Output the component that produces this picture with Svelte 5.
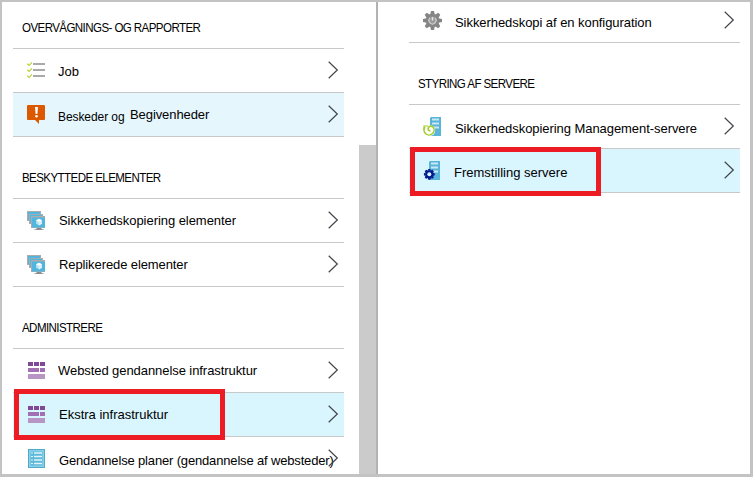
<script>
  const left = [
    {
      title: 'OVERVÅGNINGS- OG RAPPORTER', first: true,
      rows: [
        { icon: 'tasks', label: 'Job', x: 45, y: 1, track: 0 },
        { icon: 'alert', small: 'Beskeder og', label: 'Begivenheder', x: 45, y: 0, track: -0.08, tone: 'hover' }
      ]
    },
    {
      title: 'BESKYTTEDE ELEMENTER',
      rows: [
        { icon: 'monitors', label: 'Sikkerhedskopiering elementer', x: 46, y: 0, track: -0.05 },
        { icon: 'monitors', label: 'Replikerede elementer', x: 46, y: 0, track: -0.1 }
      ]
    },
    {
      title: 'ADMINISTRERE',
      rows: [
        { icon: 'blocks', label: 'Websted gendannelse infrastruktur', x: 45, y: 0, track: -0.07 },
        { icon: 'blocks', label: 'Ekstra infrastruktur', x: 46, y: 0, track: 0, tone: 'selected', mark: 'mark-left' },
        { icon: 'plan', label: 'Gendannelse planer (gendannelse af websteder)', x: 46, y: 2, track: -0.16 }
      ]
    }
  ];
  const right = [
    {
      rows: [{ icon: 'gear', label: 'Sikkerhedskopi af en konfiguration', x: 46, y: 2, track: -0.06, cut: true }]
    },
    {
      title: 'STYRING AF SERVERE',
      rows: [
        { icon: 'restore', label: 'Sikkerhedskopiering Management-servere', x: 46, y: 2, track: -0.06 },
        { icon: 'process', label: 'Fremstilling servere', x: 45, y: 2, track: 0, tone: 'selected', mark: 'mark-right' }
      ]
    }
  ];
  const teeth = [0, 45, 90, 135, 180, 225, 270, 315];
</script>

{#snippet monitor(x, y)}
  <rect {x} {y} width="14" height="10" fill="#a9adb0" />
  <rect x={x + 1} y={y + 1} width="12" height="8" fill="#51b5de" />
{/snippet}

{#snippet server()}
  <path d="M8 0h10v19H7V1z" fill="#59b4d9" />
  <path d="M9 2.500h7M9 6.500h7M9 10.500h7" stroke="#c9e8f4" stroke-width="2" />
{/snippet}

{#snippet icon(name)}
  <svg class="icon" width="20" height="20" viewBox="0 0 20 20">
    {#if name === 'tasks'}
      <path d="M6 3h12M6 9h12M6 15h12" stroke="#aaa" stroke-width="2" />
      <path d="M.4 2.700l1.600 1.600L5 1.300M.4 8.700l1.600 1.600L5 7.300M.4 14.700l1.600 1.600L5 13.300" fill="none" stroke="#b8d432" stroke-width="1.200" />
    {:else if name === 'alert'}
      <path d="M1 0h16q1 0 1 1v13q0 1-1 1h-5v4l-4-4H1q-1 0-1-1V1q0-1 1-1z" fill="#dd5900" />
      <path d="M8 2h3l-.6 7H8.600z" fill="#fff" />
      <circle cx="9.500" cy="11.300" r="1.300" fill="#fff" />
    {:else if name === 'monitors'}
      {@render monitor(0, 0)}
      {@render monitor(2, 3)}
      <rect x="4" y="5" width="14" height="12" fill="#a9adb0" />
      <rect x="5" y="6.500" width="13" height="10" fill="#51b5de" />
      <path d="M9.500 17h5v1.200h2V19h-9v-.8h2z" fill="#8a8d90" />
      <path d="M12 7.800l2.900 1.500v3.500L12 14.400l-2.900-1.600V9.300z" fill="#b9e2f2" />
      <path d="M12 7.800l2.900 1.500L12 11 9.100 9.300z" fill="#fff" />
      <path d="M12 11l2.900-1.700v3.500L12 14.400z" fill="#dff2fa" />
    {:else if name === 'blocks'}
      <path d="M1 1h5v4H1zM7 1h5v4H7zM13 1h5v4h-5z" fill="#804998" />
      <path d="M1 7h11v4H1zM13 7h5v4h-5z" fill="#a16fb4" />
      <path d="M1 13h17v5H1z" fill="#b796c6" />
    {:else if name === 'plan'}
      <rect x="1.500" y=".5" width="16" height="18" fill="#8bcfe6" stroke="#4eabc9" />
      <rect x="3.500" y="2.500" width="12" height="14" fill="#5bb9d9" />
      <path d="M7 4h8M7 7.500h8M7 11h8M7 14.500h8" stroke="#e2f4fa" stroke-width="1.400" />
      <path d="M4 4h2M4 7.500h2M4 11h2M4 14.500h2" stroke="#e2f4fa" stroke-width="1.200" />
    {:else if name === 'gear'}
      <g fill="#858585">
        {#each teeth as a}
          <path d="M7.200 3.500L8 0h3l.8 3.500z" transform="rotate({a} 9.500 9.500)" />
        {/each}
        <circle cx="9.500" cy="9.500" r="6.800" />
      </g>
      <circle cx="9.500" cy="9.500" r="4" fill="#9a9a9a" />
      <path d="M7 7A3.500 3.500 0 1 0 12 7" fill="none" stroke="#cfcfcf" stroke-width="1.200" />
      <path d="M9.500 6v3.500" stroke="#e4e4e4" stroke-width="1.500" />
    {:else if name === 'restore'}
      {@render server()}
      <circle cx="6.500" cy="13.500" r="5.600" fill="#fff" />
      <path d="M2 10A5 5 0 1 0 9.800 9.700Q7 8.200 5.400 10.600Q4.300 13.800 7.500 13.600" fill="none" stroke="#a3cf2c" stroke-width="1.600" />
      <path d="M1 13.200V9h4.200" fill="none" stroke="#a3cf2c" stroke-width="1.200" />
    {:else if name === 'process'}
      <g transform="translate(-1 0)">{@render server()}</g>
      <g fill="#00188f">
        {#each teeth as a}
          <path d="M4.700 9.500L5.300 7.900h2l.6 1.600z" transform="rotate({a} 6.300 13.300)" />
        {/each}
        <circle cx="6.300" cy="13.300" r="4.100" />
      </g>
      <circle cx="6.300" cy="13.300" r="2" fill="#d9f5fe" />
    {/if}
  </svg>
{/snippet}

{#snippet panel(sections)}
  {#each sections as section}
    {#if section.title}
      <h2 class:first={section.first}><span>{section.title}</span></h2>
    {/if}
    {#each section.rows as row}
      <div class="row {row.tone ?? ''}" class:cut={row.cut}>
        {@render icon(row.icon)}
        <span class="label" style="padding-left:{row.x - 34}px;padding-top:{row.y + 12}px;letter-spacing:{row.track}px">
          {#if row.small}<small>{row.small}</small>{/if}{row.label}
        </span>
        <svg class="chevron" width="11" height="18" viewBox="0 0 11 18">
          <path d="M.7.7L9.300 9 .7 17.300" fill="none" stroke="#41454a" stroke-width="1.200" />
        </svg>
        {#if row.mark}<i class="mark {row.mark}"></i>{/if}
      </div>
    {/each}
  {/each}
{/snippet}

<main>
  <section class="pane left">
    <nav>{@render panel(left)}</nav>
    <div class="scroll"></div>
  </section>
  <section class="pane right">
    <nav>{@render panel(right)}</nav>
  </section>
</main>

<style>
  main {
    box-sizing: border-box;
    width: 753px;
    height: 477px;
    display: flex;
    border: solid #c3c3c3;
    border-width: 2px 3px 3px 2px;
    background: #fff;
    color: #000;
    overflow: hidden;
    font: 13px/20px "Liberation Sans", Arial, sans-serif;
  }
  .pane {
    display: flex;
    box-sizing: border-box;
    height: 472px;
    overflow: hidden;
  }
  .left {
    width: 376px;
    padding-left: 11px;
    border-right: 2px solid #b3b3b3;
    justify-content: space-between;
  }
  .right {
    width: 372px;
    padding-left: 31px;
  }
  nav {
    width: 331px;
    flex: none;
  }
  .scroll {
    width: 17px;
    margin-top: 143px;
    background: #cbcbcb;
  }
  h2 {
    box-sizing: border-box;
    height: 62px;
    margin: 0;
    padding: 31px 0 0 9px;
    border-bottom: 1px solid #c8c8c8;
    font: inherit;
    white-space: nowrap;
  }
  h2 span {
    display: inline-block;
    letter-spacing: -0.65px;
    transform: scaleX(0.888);
    transform-origin: 0 0;
  }
  h2.first {
    height: 47px;
    padding-top: 16px;
  }
  .row {
    position: relative;
    box-sizing: border-box;
    height: 44px;
    display: flex;
    align-items: flex-start;
    border-bottom: 1px solid #c8c8c8;
    white-space: nowrap;
  }
  .cut {
    margin-top: -3px;
  }
  .hover {
    background: #e5f6fd;
  }
  .selected {
    background: #d9f5fe;
  }
  .icon {
    flex: none;
    margin: 12px 0 0 14px;
  }
  .label {
    flex: 1;
    width: 0;
  }
  small {
    display: inline-block;
    width: 72px;
    font-size: 12px;
    position: relative;
    top: 2px;
  }
  .chevron {
    flex: none;
    margin: 12px 5px 0 0;
  }
  .mark {
    position: absolute;
    box-sizing: border-box;
    border: 5px solid #ed1c24;
    z-index: 1;
  }
  .mark-left {
    left: 1px;
    top: -4px;
    width: 211px;
    height: 51px;
  }
  .mark-right {
    left: 1px;
    top: -2px;
    width: 191px;
    height: 49px;
  }
</style>
